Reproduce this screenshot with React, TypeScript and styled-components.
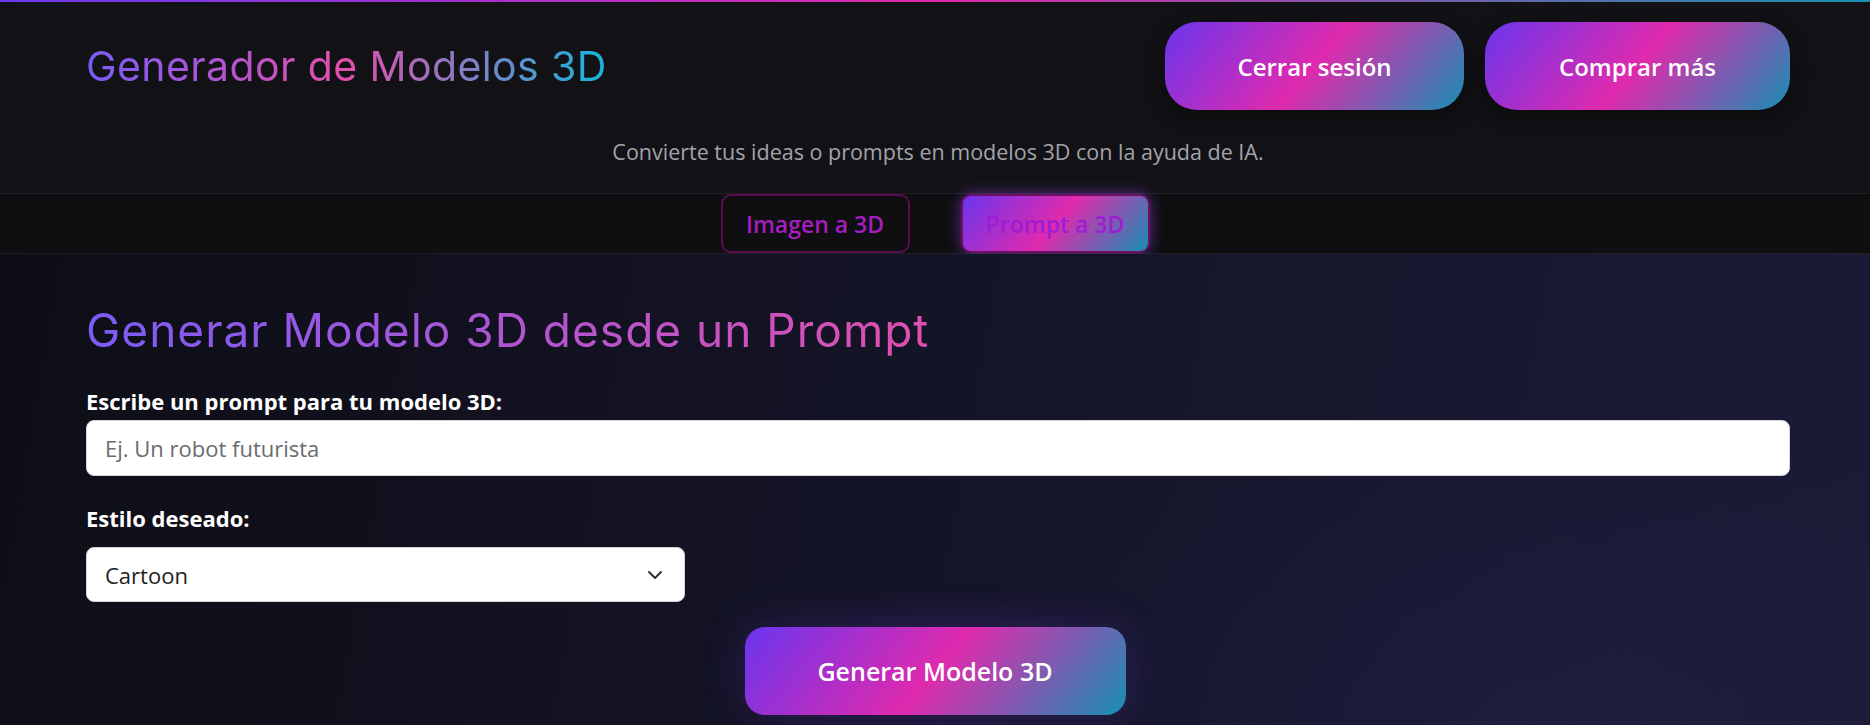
import React from 'react';
import styled, { createGlobalStyle } from 'styled-components';
import { ChevronDown } from 'lucide-react';

const brandGradient = 'linear-gradient(130deg, #6a35ee 0%, #df2aad 50%, #1790b4 100%)';
const textGradient = 'linear-gradient(90deg, #7b5cf6 0%, #e24fae 50%, #15b6de 100%)';

const GlobalStyle = createGlobalStyle`
  * {
    box-sizing: border-box;
  }
  body {
    margin: 0;
    background: #111114;
    font-family: 'Open Sans', 'Noto Sans', sans-serif;
    color: #fff;
  }
`;

const Page = styled.div`
  min-height: 100vh;
  display: flex;
  flex-direction: column;
`;

const TopLine = styled.div`
  height: 2px;
  background: linear-gradient(90deg, #6a3aee 0%, #e02aac 50%, #1890b5 100%);
`;

const Header = styled.header`
  background: #121216;
  padding: 20px 80px 26px 86px;
`;

const HeaderRow = styled.div`
  display: flex;
  align-items: center;
  justify-content: space-between;
`;

const Brand = styled.h1`
  display: inline-block;
  margin: 0;
  font-family: 'Inter', 'DejaVu Sans', sans-serif;
  font-size: 41px;
  font-weight: 400;
  letter-spacing: 0.4px;
  background: ${textGradient};
  -webkit-background-clip: text;
  background-clip: text;
  color: transparent;
`;

const Actions = styled.div`
  display: flex;
  gap: 21px;
`;

const PillButton = styled.button<{ $width: number }>`
  width: ${p => p.$width}px;
  height: 88px;
  border: none;
  border-radius: 32px;
  background: ${brandGradient};
  color: #fff;
  font-family: inherit;
  font-size: 24px;
  font-weight: 600;
  box-shadow: 0 6px 18px rgba(0, 0, 0, 0.45);
  cursor: pointer;
`;

const Subtitle = styled.p`
  margin: 27px 0 0;
  text-align: center;
  font-size: 21.5px;
  line-height: 30px;
  color: #a3a3ab;
`;

const TabBar = styled.nav`
  display: flex;
  justify-content: center;
  gap: 51px;
  height: 61px;
  background: #0f0f12;
  border-top: 1px solid #1e1e24;
  border-bottom: 1px solid #1e1e24;
`;

const Tab = styled.button<{ $active?: boolean }>`
  width: 189px;
  height: 59px;
  border: 2px solid ${p => (p.$active ? '#6e0f63' : '#5c0b52')};
  border-radius: 10px;
  background: ${p => (p.$active ? brandGradient : 'transparent')};
  color: ${p => (p.$active ? '#9c1ed3' : '#a51dbf')};
  font-family: inherit;
  font-size: 23px;
  font-weight: 600;
  box-shadow: ${p => (p.$active ? '0 0 14px rgba(150, 70, 240, 0.55)' : 'none')};
  cursor: pointer;
`;

const Main = styled.main`
  flex: 1;
  padding: 49px 80px 0 86px;
  background:
    radial-gradient(ellipse 260px 120px at 937px 420px, rgba(70, 40, 150, 0.18), transparent 70%),
    radial-gradient(ellipse 700px 420px at 1550px 470px, rgba(32, 32, 72, 0.55), transparent 75%),
    linear-gradient(100deg, #0e0e16 0%, #15152a 55%, #1c1b36 100%);
`;

const Heading = styled.h2`
  margin: 0;
  font-family: 'Inter', 'DejaVu Sans', sans-serif;
  font-size: 46px;
  font-weight: 400;
  line-height: 55px;
  letter-spacing: 1px;
  background: ${textGradient};
  -webkit-background-clip: text;
  background-clip: text;
  color: transparent;
`;

const Field = styled.div<{ $top: number; $gap: number }>`
  display: flex;
  flex-direction: column;
  gap: ${p => p.$gap}px;
  margin-top: ${p => p.$top}px;
`;

const Label = styled.label`
  font-size: 22px;
  font-weight: 700;
  line-height: 28px;
  color: #fff;
`;

const TextInput = styled.input`
  height: 56px;
  padding: 0 18px;
  border: 1px solid #d4d4d8;
  border-radius: 8px;
  background: #fff;
  font-family: inherit;
  font-size: 22px;
  color: #222;
  outline: none;

  &::placeholder {
    color: #6b6b70;
  }
`;

const SelectWrap = styled.div`
  position: relative;
  width: 599px;
`;

const Select = styled.select`
  width: 100%;
  height: 55px;
  padding: 0 18px;
  border: 1px solid #d4d4d8;
  border-radius: 8px;
  background: #fff;
  font-family: inherit;
  font-size: 22px;
  color: #222;
  appearance: none;
  outline: none;
`;

const Chevron = styled(ChevronDown)`
  position: absolute;
  right: 18px;
  top: 50%;
  transform: translateY(-50%);
  color: #333;
  pointer-events: none;
`;

const SubmitRow = styled.div`
  display: flex;
  justify-content: center;
  margin-top: 25px;
  margin-left: -6px;
`;

const SubmitButton = styled.button`
  width: 381px;
  height: 88px;
  border: none;
  border-radius: 20px;
  background: ${brandGradient};
  color: #fff;
  font-family: inherit;
  font-size: 25px;
  font-weight: 600;
  box-shadow: 0 0 40px rgba(110, 60, 220, 0.25);
  cursor: pointer;
`;

export default function App() {
  return (
    <Page>
      <GlobalStyle />
      <TopLine />
      <Header>
        <HeaderRow>
          <Brand>Generador de Modelos 3D</Brand>
          <Actions>
            <PillButton $width={299}>Cerrar sesión</PillButton>
            <PillButton $width={305}>Comprar más</PillButton>
          </Actions>
        </HeaderRow>
        <Subtitle>Convierte tus ideas o prompts en modelos 3D con la ayuda de IA.</Subtitle>
      </Header>
      <TabBar>
        <Tab>Imagen a 3D</Tab>
        <Tab $active>Prompt a 3D</Tab>
      </TabBar>
      <Main>
        <Heading>Generar Modelo 3D desde un Prompt</Heading>
        <Field $top={29} $gap={5}>
          <Label htmlFor="prompt">Escribe un prompt para tu modelo 3D:</Label>
          <TextInput id="prompt" placeholder="Ej. Un robot futurista" />
        </Field>
        <Field $top={28} $gap={15}>
          <Label htmlFor="style">Estilo deseado:</Label>
          <SelectWrap>
            <Select id="style" defaultValue="cartoon">
              <option value="cartoon">Cartoon</option>
              <option value="realista">Realista</option>
              <option value="lowpoly">Low Poly</option>
            </Select>
            <Chevron size={24} strokeWidth={2} />
          </SelectWrap>
        </Field>
        <SubmitRow>
          <SubmitButton>Generar Modelo 3D</SubmitButton>
        </SubmitRow>
      </Main>
    </Page>
  );
}
